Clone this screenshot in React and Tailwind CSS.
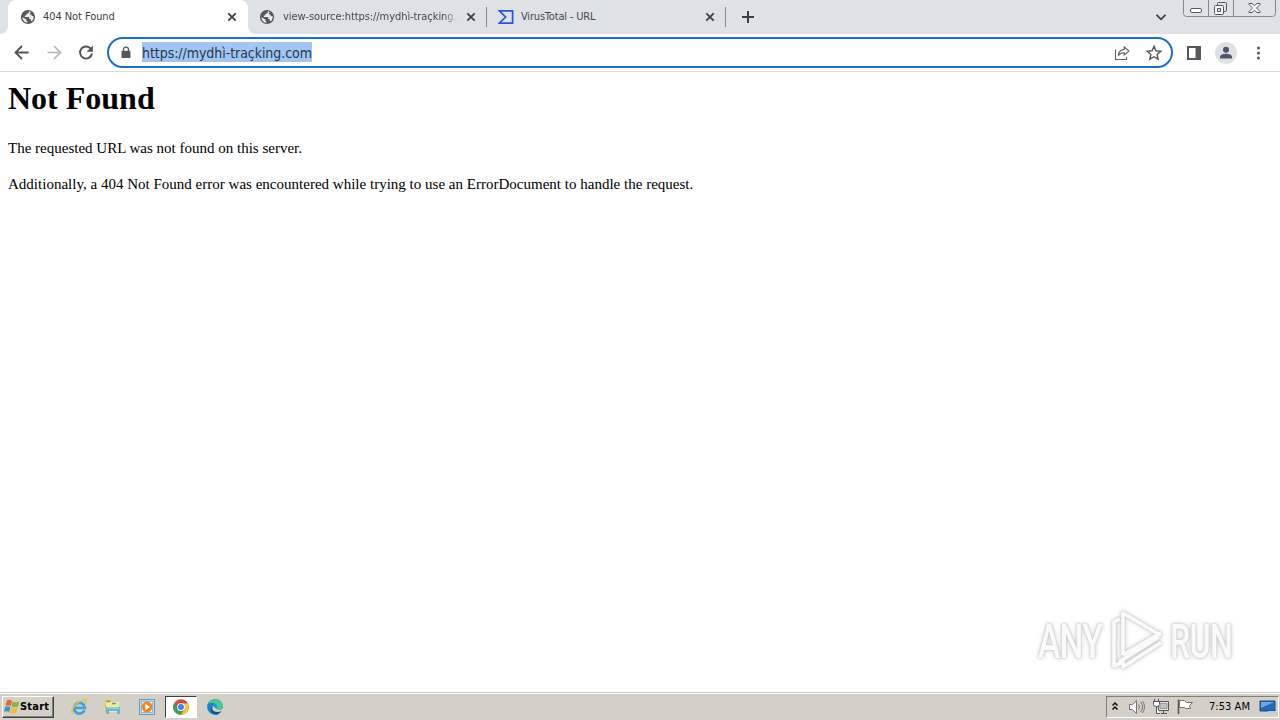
import React from "react";

const ui = "font-['DejaVu_Sans_Condensed','DejaVu_Sans',sans-serif]";

function Globe() {
  return (
    <svg className="h-4 w-4 shrink-0" viewBox="0 0 16 16">
      <circle cx="8" cy="8" r="7.100" fill="#54585d" />
      <path d="M8.600 2.300C9.300 3.300 9 4 8 4.500L6.300 5v1.600H4.800v1.500h4.400v2h1.600v1.700l.9.500C13.300 11 14 9.300 13.500 7.100l-1.900.2V5.600H9.900V4.300L11 3C10.200 2.500 9.500 2.300 8.600 2.300z" fill="#eceef0" />
      <path d="M2.300 8.300l4.100 2.300v1.500l1 .6v1.100C4.500 13.500 2.500 11.300 2.300 8.300z" fill="#eceef0" />
    </svg>
  );
}

function Close() {
  return (
    <svg className="h-4 w-4 shrink-0" viewBox="0 0 16 16">
      <path d="M4.300 4.300l7.400 7.400M11.700 4.300l-7.400 7.400" stroke="#3c4043" strokeWidth="1.800" />
    </svg>
  );
}

function VirusTotal() {
  return (
    <svg className="h-4 w-4 shrink-0" viewBox="0 0 16 16">
      <path d="M1.300 1.900h13.300v12.200H1.300L7.600 8z" fill="none" stroke="#3054dc" strokeWidth="1.700" />
    </svg>
  );
}

function TabBar() {
  return (
    <div className="flex h-[34px] items-stretch bg-[#dee1e6]">
      <div className="flex w-2 items-end bg-white">
        <div className="h-full w-full rounded-br-lg bg-[#dee1e6]" />
      </div>
      <div className="w-60 bg-[#dee1e6]">
        <div className="flex h-full items-center rounded-t-lg bg-white pl-3 pr-2">
          <Globe />
          <span className="ml-[7px] flex-1 whitespace-nowrap pt-px text-[11px] tracking-[-0.07px] text-[#3c4043]">404 Not Found</span>
          <Close />
        </div>
      </div>
      <div className="w-[239px] bg-white">
        <div className="flex h-full items-center rounded-bl-lg bg-[#dee1e6] pl-[11px]">
          <Globe />
          <span className="ml-[8px] w-[175px] overflow-hidden whitespace-nowrap pt-px text-[11px] tracking-[-0.07px] text-[#45494d] [mask-image:linear-gradient(to_right,black_92%,transparent)]">view-source:https://mydhì-traçking.com</span>
          <span className="ml-[5px] flex"><Close /></span>
          <span className="ml-[7px] h-5 w-px bg-[#85898f]" />
        </div>
      </div>
      <div className="flex w-[239px] items-center pl-[11px]">
        <VirusTotal />
        <span className="ml-[7px] flex-1 whitespace-nowrap pt-px text-[11px] tracking-[-0.18px] text-[#45494d]">VirusTotal - URL</span>
        <Close />
        <span className="ml-[7px] h-5 w-px bg-[#85898f]" />
      </div>
      <div className="flex flex-1 items-center pl-[14px]">
        <svg className="h-4 w-4" viewBox="0 0 16 16"><path d="M8 2v12M2 8h12" stroke="#3c4043" strokeWidth="2" /></svg>
      </div>
      <div className="flex items-center pr-[14px]">
        <svg className="h-4 w-4" viewBox="0 0 16 16"><path d="M3.500 5.800L8 10.300l4.500-4.500" fill="none" stroke="#3c4043" strokeWidth="1.800" /></svg>
      </div>
      <div className="mr-[3px] h-[17px] w-[94px]">
        <svg className="h-[17px] w-[94px]" viewBox="0 0 94 17" fill="none">
          <path d="M.5 0v13.500q0 3 3 3h86q3 0 3-3V0M25.500 0v16M50.500 0v16" stroke="#85898f" />
          <rect x="7.500" y="8.500" width="11" height="4" rx="1.500" fill="#fff" stroke="#55595e" />
          <path d="M34.500 5.500v-2q0-1 1-1h7q1 0 1 1v7q0 1-1 1h-2" stroke="#55595e" />
          <path d="M39.500 5.500h-7q-1 0-1 1v7q0 1 1 1h7q1 0 1-1v-7q0-1-1-1zM34.500 8.500h3v3h-3z" stroke="#55595e" fill="#f5f6f7" />
          <path d="M66 3.500h3l2.500 2.200L74 3.500h3v1L73.500 8l3.500 3.500v1h-3l-2.500-2.200-2.500 2.200h-3v-1L69.500 8 66 4.500z" fill="#fff" stroke="#55595e" />
        </svg>
      </div>
    </div>
  );
}

function Toolbar() {
  return (
    <div className="flex h-[38px] items-center border-b border-[#dcdcde] bg-white pl-[13px]">
      <svg className="h-[18px] w-[18px]" viewBox="0 0 18 18"><path d="M15.500 8.500H3M9 2L2.500 8.500 9 15" fill="none" stroke="#505459" strokeWidth="1.800" /></svg>
      <svg className="ml-[14px] h-[18px] w-[18px]" viewBox="0 0 18 18"><path d="M2.500 8.500H15M9 2l6.500 6.500L9 15" fill="none" stroke="#b6b9bc" strokeWidth="1.700" /></svg>
      <svg className="ml-[14px] h-[18px] w-[18px]" viewBox="0 0 18 18"><path d="M14.200 5.300A6 6 0 1 0 15 9.500" fill="none" stroke="#505459" strokeWidth="1.900" /><path d="M15.900 1.500v6.200H9.700z" fill="#505459" /></svg>
      <div className="ml-3 flex h-[31px] w-[1066px] items-center rounded-full border-2 border-[#1b6fd0] pl-[11px] pr-[8px]">
        <svg className="h-4 w-3" viewBox="0 0 12 16"><path d="M3.500 6V4.600a2.500 2.500 0 0 1 5 0V6" fill="none" stroke="#55595e" strokeWidth="1.300" /><rect x="1.500" y="5.800" width="9" height="7.200" rx="1" fill="#55595e" /></svg>
        <span className="-mt-px ml-[10px] h-5 w-[170px] whitespace-nowrap bg-[#a3c5f2] pt-px text-[14px] leading-5 tracking-[-0.055px] text-[#27384d]">https://mydhì-traçking.com</span>
        <span className="flex-1" />
        <svg className="h-4 w-4" viewBox="0 0 16 16" fill="none" stroke="#5f6368" strokeWidth="1.100"><path d="M1.500 4.500v10h11V12" /><path d="M10.200 2l4.800 4-4.800 4V7.800c-3 0-4.700.9-6 2.800C4.600 7.400 6.500 4.800 10.200 4.400z" /></svg>
        <svg className="ml-[15px] h-[18px] w-[18px]" viewBox="0 0 18 18"><path d="M9 2.300l1.900 4.500 4.900.4-3.700 3.200 1.100 4.800L9 12.700l-4.200 2.500 1.100-4.800-3.700-3.200 4.900-.4z" fill="none" stroke="#55595e" strokeWidth="1.400" /></svg>
      </div>
      <svg className="ml-[14px] h-[14px] w-[14px]" viewBox="0 0 14 14"><path d="M1 1h12v12H1z" fill="#fff" stroke="#55595e" strokeWidth="2" /><path d="M8.500 1H14v12H8.500z" fill="#55595e" /></svg>
      <div className="ml-[14px] flex h-[22px] w-[22px] items-center justify-center rounded-full bg-[#dfe1e5]">
        <svg className="h-4 w-4" viewBox="0 0 16 16" fill="#4d5667"><circle cx="8" cy="4.800" r="3" /><path d="M2 13.500v-1.700C2 9.500 6 8.700 8 8.700s6 .8 6 3.100v1.700z" /></svg>
      </div>
      <svg className="ml-[13px] h-4 w-4" viewBox="0 0 16 16" fill="#55595e"><circle cx="8.500" cy="3" r="1.500" /><circle cx="8.500" cy="8" r="1.500" /><circle cx="8.500" cy="13" r="1.500" /></svg>
    </div>
  );
}

function Watermark() {
  return (
    <div className="absolute right-[45px] bottom-[20px] flex h-[64px] w-[197px] items-center justify-between font-[Roboto,sans-serif] text-[48px] font-medium leading-none text-[#fafafa] [filter:drop-shadow(0_0_1px_#c4c4c4)_drop-shadow(0_0_2px_#d2d2d2)]">
      <span className="flex w-[66px] pt-[3px]"><span className="origin-left scale-x-[0.7] tracking-[-1px]">ANY</span></span>
      <svg className="h-[64px] w-[60px] shrink-0" viewBox="0 0 60 64" fill="none" stroke="#fafafa" strokeWidth="3.600" strokeLinejoin="round">
        <path d="M16 47V5l38 22.500M16 47l38-22.500M54 34.500L16 59v-5l-9 4V14l6-3M12 54l40-25" />
      </svg>
      <span className="flex w-[65px] pt-[3px]"><span className="origin-left scale-x-[0.67] tracking-[-1px]">RUN</span></span>
    </div>
  );
}

function Taskbar() {
  return (
    <div className="flex h-[28px] items-center border-t border-[#d4d0c8] bg-[#d4d0c8] pt-px shadow-[inset_0_1px_0_#fff]">
      <div className="ml-[2px] flex h-[22px] w-[52px] items-center border border-b-[#404040] border-l-white border-r-[#404040] border-t-white bg-[#d4d0c8] pl-px shadow-[inset_-1px_-1px_0_#808080]">
        <svg className="h-4 w-4 shrink-0" viewBox="0 0 16 16">
          <path d="M3 1.500Q6 0 8 2L6.700 7.300Q4.500 5.500 1.500 6.800z" fill="#e7662d" />
          <path d="M8.700 2.300Q11.500 4 15.500 2.300L14 7.600Q10.500 9 7.500 7.500z" fill="#87b643" />
          <path d="M1.300 7.700Q4.300 6.500 6.500 8.200L5.200 13.200Q3 11.500 0 12.700z" fill="#4195cd" />
          <path d="M7.200 8.500Q10.300 10 13.700 8.700L12.200 13.900Q8.500 15 5.900 13.500z" fill="#f2bd32" />
        </svg>
        <span className="pt-px text-[11px] font-bold tracking-[0.2px] text-black">Start</span>
      </div>
      <svg className="ml-[16px] h-[18px] w-[18px]" viewBox="0 0 18 18" fill="none">
        <path d="M14.500 12.300a5.400 5.400 0 1 1 .4-2.500H5" stroke="#42a5d9" strokeWidth="2.800" />
        <path d="M3 16C-1 14 5 5 12 2.300c4-1.600 5 0 3.500 3.500" stroke="#e9bd42" strokeWidth="1.400" />
      </svg>
      <svg className="ml-[15px] h-[18px] w-[18px]" viewBox="0 0 18 18">
        <path d="M2 2h6l1 2h6v10H2z" fill="#e7bf51" />
        <path d="M3 4h13v10H3z" fill="#f7e99b" />
        <path d="M4 3.500h3M9 5.500h4" stroke="#60a869" strokeWidth="1.500" />
        <path d="M3 9h14v7h-3v-3H6v3H3z" fill="#6bb5d7" />
        <path d="M4 10h12" stroke="#bae5f1" />
      </svg>
      <svg className="ml-[17px] h-[18px] w-[18px]" viewBox="0 0 18 18">
        <rect x="1.500" y="1.500" width="15" height="15" fill="#b7d9ef" stroke="#659bc4" />
        <rect x="3.500" y="3.500" width="11" height="11" fill="#e9f4fb" stroke="#8cbddb" />
        <circle cx="9" cy="9" r="5.400" fill="#ef8620" />
        <path d="M7.300 5.800L12 9l-4.700 3.200z" fill="#fff" />
      </svg>
      <div className="ml-[9px] flex h-[22px] w-8 items-center justify-center border border-b-white border-l-[#404040] border-r-white border-t-[#404040] bg-white">
        <svg className="h-4 w-4" viewBox="0 0 16 16">
          <circle cx="8" cy="8" r="7.800" fill="#e1463b" />
          <path d="M1.250 4.100A7.800 7.800 0 0 0 8 15.800L11.400 10H4.600z" fill="#36a35b" />
          <path d="M8 15.800A7.800 7.800 0 0 0 14.750 4.500H8l3.500 5.500z" fill="#f8c934" />
          <circle cx="8" cy="8" r="3.900" fill="#fff" />
          <circle cx="8" cy="8" r="3" fill="#4386e8" />
        </svg>
      </div>
      <svg className="ml-[9px] h-[18px] w-[18px]" viewBox="0 0 18 18">
        <path d="M1.500 6C4 0 15 -1 17 8c0 4-4 4.500-6.500 3L7 8C5 9 4 14 12 16.500 4 18 0 12 1.500 6z" fill="#2499cf" />
        <path d="M9 1c5 0 8 3.500 8 7.500 0 4-4.500 4-6.500 2.500 1.500-2 .8-4-1.500-5-2-1-5-1-6.500 0C4 2.500 6 1 9 1z" fill="#4bc49a" />
        <path d="M2 6c3-2 7-1 8 1-3-1-5 1-5 3 0 4 4 6.500 8 6C6 18.500-.5 13 2 6z" fill="#1784c8" />
        <path d="M7 8c-2.500 4 2 7.500 8.500 5.300C13 17.500 7 17.200 5.300 13.500 4 11 5 8.800 7 8z" fill="#134f91" />
      </svg>
      <span className="flex-1" />
      <div className="mr-[1px] flex h-[22px] w-[173px] items-center border border-b-white border-l-[#808080] border-r-white border-t-[#808080]">
        <svg className="ml-[3px] h-[14px] w-[10px]" viewBox="0 0 10 14" fill="none" stroke="#111" strokeWidth="1.500"><path d="M2.500 5.500l2.500-2.500 2.500 2.500M2.500 9.500L5 7l2.500 2.500" /></svg>
        <svg className="ml-[8px] h-[18px] w-[18px]" viewBox="0 0 18 18" fill="none" stroke="#77777a"><path d="M1.500 6.500h3l4-4v13l-4-4h-3z" fill="#fff" /><path d="M10.500 6.500q2 2.500 0 5M12.500 4q4 5 0 10M14.500 3q4 6 0 12" /></svg>
        <svg className="ml-[6px] h-[18px] w-[18px]" viewBox="0 0 18 18" fill="none" stroke="#55585a"><path d="M6.500 3.500h10v9h-10zM9 15.500h6M11.500 13v2" fill="#e6e6e4" /><path d="M8 5.500h7v5H8z" fill="#c1c3c2" stroke="#999" /><path d="M2.500 1v3M6.500 1v3M1.500 3.500h6v3q0 2-3 2t-3-2zM4.500 9v6.500H8" fill="#fff" /></svg>
        <svg className="ml-[6px] h-[18px] w-[18px]" viewBox="0 0 18 18" fill="none" stroke="#707275"><path d="M2.500 1.500v14.500" stroke="#555" strokeWidth="1.500" /><path d="M3.500 2.500h5l2 2h6l-3 3 1 3h-5l-1-1h-5z" fill="#fff" /></svg>
        <span className="ml-[15px] w-[43px] whitespace-nowrap pt-px text-[11px] tracking-[0.05px] text-black">7:53 AM</span>
        <svg className="ml-[7px] h-[16px] w-[18px]" viewBox="0 0 18 16"><path d="M1 2h15v10H1z" fill="#2669b7" stroke="#174987" /><path d="M2 3h13L2 9z" fill="#6fa8e5" /><path d="M9 13h8" stroke="#aacce8" strokeWidth="2" /></svg>
      </div>
    </div>
  );
}

export default function App() {
  return (
    <div className={`flex h-[720px] w-[1280px] flex-col overflow-hidden bg-white ${ui}`}>
      <TabBar />
      <Toolbar />
      <main className="relative flex-1 pl-2 font-['Liberation_Serif',serif] text-black">
        <h1 className="pt-[8px] text-[32px] font-bold leading-[37px]">Not Found</h1>
        <p className="mt-[22px] text-[15px] leading-[18px]">The requested URL was not found on this server.</p>
        <p className="mt-[18px] text-[15px] leading-[18px] tracking-[0.009px]">Additionally, a 404 Not Found error was encountered while trying to use an ErrorDocument to handle the request.</p>
        <Watermark />
      </main>
      <Taskbar />
    </div>
  );
}
